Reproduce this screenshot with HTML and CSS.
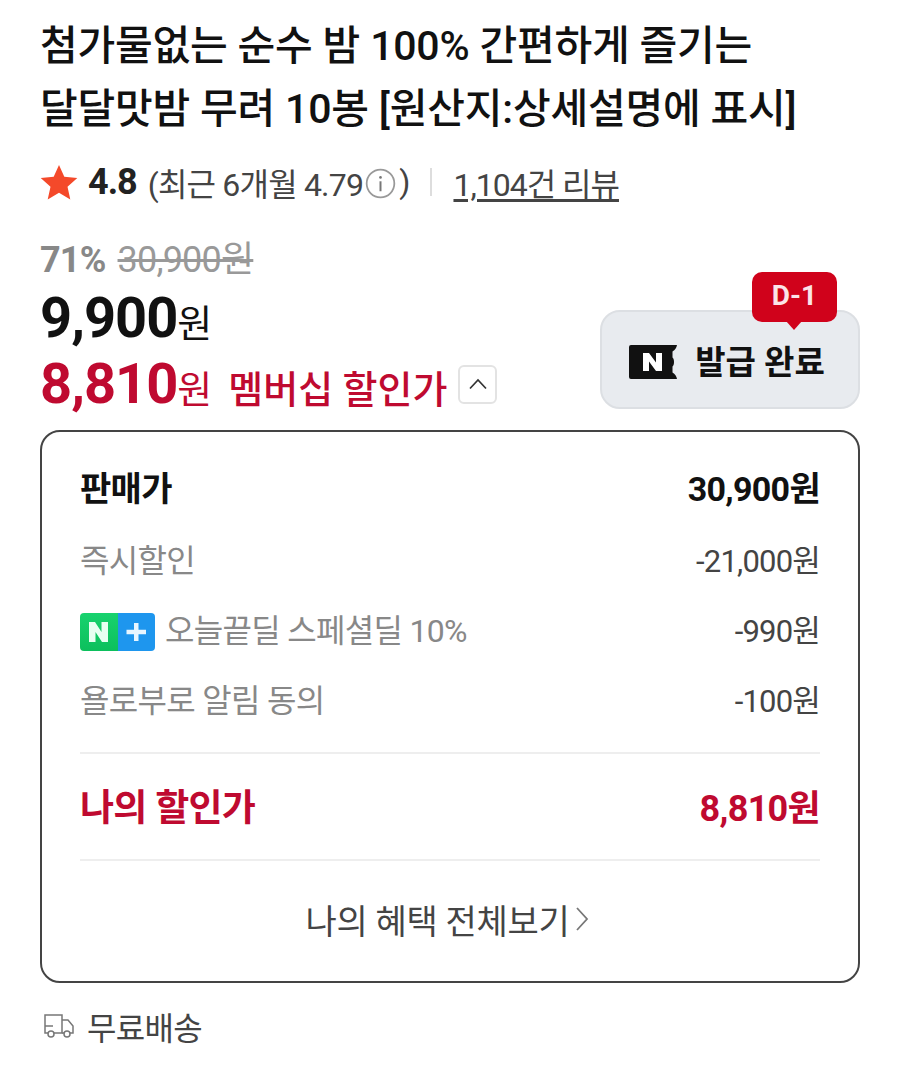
FILE: index.html
```html
<!DOCTYPE html>
<html lang="ko">
<head>
    <meta charset="UTF-8">
    <meta name="viewport" content="width=device-width, initial-scale=1.0">
    <title>달달맛밤 무려 10봉</title>
    <link rel="stylesheet" href="styles.css">
</head>
<body>
    <div class="page">
        <h1 class="title">첨가물없는 순수 밤 100% 간편하게 즐기는<br>달달맛밤 무려 10봉 [원산지:상세설명에 표시]</h1>

        <div class="rating">
            <svg class="star" width="38" height="36" viewBox="0 0 38 36"><path d="M19 1l5.300 11.800 13 1.300-9.800 8.600 2.800 12.700L19 28.800 7.700 35.400l2.800-12.700L.7 14.100l13-1.300z" fill="#f4492a"/></svg>
            <strong class="score">4.8</strong>
            <span class="recent">(최근 6개월 4.79<svg class="info" width="31" height="31" viewBox="0 0 28 28"><circle cx="14" cy="14" r="12.500" fill="none" stroke="#999" stroke-width="1.600"/><path d="M14 12v9" stroke="#777" stroke-width="1.800"/><circle cx="14" cy="8.500" r="1.200" fill="#777"/></svg>)</span>
            <span class="sep"></span>
            <span class="reviews">1,104건 리뷰</span>
        </div>

        <div class="price-area">
            <div class="prices">
                <div class="orig"><strong>71%</strong><s>30,900원</s></div>
                <div class="sale"><b>9,900</b><span>원</span></div>
                <div class="member">
                    <b>8,810</b><span class="won">원</span><span class="label">멤버십 할인가</span>
                    <span class="toggle"><svg width="20" height="12" viewBox="0 0 20 12"><path d="M2 10.500L10 2l8 8.500" fill="none" stroke="#333" stroke-width="1.700"/></svg></span>
                </div>
            </div>
            <div class="coupon">
                <svg width="48" height="34" viewBox="0 0 48 34"><path d="M2 0h46c-.5 3-2 5-4.500 6.500v6c2 1.500 2 7.500 0 9v6C46 29 47.500 31 48 34H2a2 2 0 0 1-2-2V2a2 2 0 0 1 2-2z" fill="#111"/><path d="M14 8h6l7 9.500V8h6v18h-6l-7-9.500V26h-6z" fill="#fff"/></svg>
                <span>발급 완료</span>
                <div class="dday">D-1</div>
            </div>
        </div>

        <div class="box">
            <div class="row head"><span>판매가</span><span>30,900원</span></div>
            <div class="row"><span>즉시할인</span><span class="val">-21,000원</span></div>
            <div class="row">
                <span class="with-badge">
                    <svg class="badge" width="75" height="38" viewBox="0 0 75 38">
                        <defs>
                            <linearGradient id="n-green" x1="0" y1="0" x2="0" y2="1"><stop offset="0" stop-color="#18d26e"/><stop offset="1" stop-color="#0cbf5c"/></linearGradient>
                        </defs>
                        <path d="M4 0h34v38H4a4 4 0 0 1-4-4V4a4 4 0 0 1 4-4z" fill="url(#n-green)"/><path d="M38 0h33a4 4 0 0 1 4 4v30a4 4 0 0 1-4 4H38z" fill="#1e96ee"/><path d="M9 9h6l6.500 10V9H28v20h-6l-6.500-10v10H9z" fill="#e8fff2"/><path d="M54 10h4.500v6.800H66v4.400h-7.500V28H54v-6.800h-7.500v-4.400H54z" fill="#e8f6ff"/>
                    </svg>
                    오늘끝딜 스페셜딜 10%
                </span>
                <span class="val">-990원</span>
            </div>
            <div class="row"><span>욜로부로 알림 동의</span><span class="val">-100원</span></div>
            <div class="row mine"><span class="mine-label">나의 할인가</span><span>8,810원</span></div>
            <div class="all">나의 혜택 전체보기<svg width="14" height="26" viewBox="0 0 14 26"><path d="M2 2l10 11L2 24" fill="none" stroke="#777" stroke-width="1.800"/></svg></div>
        </div>

        <div class="delivery">
            <svg width="32" height="26" viewBox="0 0 32 26"><g fill="none" stroke="#777" stroke-width="1.500"><path d="M5 20H2V2h17v18H11"/><path d="M19 7h6l5 6v7h-3M19 20h2"/><circle cx="8" cy="21" r="3"/><circle cx="24" cy="21" r="3"/><path d="M2 13h8"/></g></svg>
            무료배송
        </div>
    </div>
</body>
</html>
```

FILE: styles.css
```css
body {
    margin: 0;
    background: #fff;
    color: #111;
    font-family: Roboto, "Noto Sans CJK KR", sans-serif;
}
.page {
    padding: 15px 40px 0 40px;
}
.title {
    margin: 0;
    font-size: 41px;
    line-height: 63px;
    font-weight: 500;
    letter-spacing: -0.2px;
    white-space: nowrap;
}
.rating {
    display: flex;
    align-items: center;
    margin-top: 21px;
    height: 40px;
    font-size: 32px;
    color: #444;
    letter-spacing: -1px;
}
.score {
    margin-left: 10px;
    font-size: 36px;
    font-weight: 700;
    color: #222;
}
.recent {
    display: flex;
    align-items: center;
    margin-left: 11px;
    letter-spacing: -0.8px;
}
.info {
    margin: 2px 3px 0 2px;
}
.sep {
    width: 2px;
    height: 28px;
    margin: 0 21px;
    background: #ddd;
}
.reviews {
    text-decoration: underline;
    text-underline-offset: 3px;
}
.price-area {
    display: flex;
    justify-content: space-between;
    align-items: flex-end;
    margin-top: 35px;
}
.orig {
    display: flex;
    gap: 12px;
    font-size: 36px;
    line-height: 46px;
    color: #888;
    letter-spacing: -0.8px;
}
.orig s {
    font-weight: 400;
    color: #999;
}
.sale {
    display: flex;
    align-items: baseline;
    height: 62px;
    margin-top: 4px;
    font-size: 38px;
    line-height: 62px;
    color: #111;
}
.sale b {
    font-size: 56px;
    font-weight: 700;
    letter-spacing: -1px;
}
.member {
    display: flex;
    align-items: baseline;
    height: 62px;
    margin-top: 4px;
    color: #bf0a30;
    font-size: 38px;
    line-height: 62px;
}
.member b {
    font-size: 56px;
    font-weight: 700;
    letter-spacing: -1px;
}
.label {
    margin-left: 16px;
    font-weight: 500;
}
.toggle {
    display: flex;
    align-items: center;
    justify-content: center;
    align-self: center;
    width: 39px;
    height: 39px;
    margin-left: 11px;
    border: 2px solid #e3e3e3;
    border-radius: 6px;
    box-sizing: border-box;
}
.coupon {
    position: relative;
    display: flex;
    align-items: center;
    justify-content: center;
    gap: 18px;
    width: 260px;
    height: 99px;
    padding-right: 6px;
    box-sizing: border-box;
    background: #e8ebef;
    border: 2px solid #dcdfe3;
    border-radius: 20px;
    font-size: 33px;
    font-weight: 700;
    margin-bottom: 6px;
}
.coupon svg {
    margin-top: 4px;
}
.dday {
    position: absolute;
    top: -40px;
    right: 21px;
    width: 85px;
    height: 50px;
    line-height: 48px;
    text-align: center;
    color: #fbe4e8;
    background: #d0021b;
    border-radius: 10px;
    font-size: 28px;
    font-weight: 700;
}
.dday::after {
    content: "";
    position: absolute;
    left: 34px;
    bottom: -8px;
    border-left: 8px solid transparent;
    border-right: 8px solid transparent;
    border-top: 9px solid #d0021b;
}
.box {
    margin-top: 15px;
    padding: 24px 38px 32px 38px;
    height: 553px;
    box-sizing: border-box;
    border: 2px solid #444;
    border-radius: 20px;
}
.row {
    display: flex;
    justify-content: space-between;
    align-items: center;
    height: 70px;
    font-size: 32px;
    color: #888;
    letter-spacing: -0.7px;
}
.row .val {
    font-size: 31px;
    letter-spacing: -0.8px;
    color: #444;
}
.head {
    height: 60px;
    margin-bottom: 7px;
    font-size: 34px;
    font-weight: 700;
    color: #111;
}
.with-badge {
    display: flex;
    align-items: center;
    gap: 10px;
}
.badge {
    margin-top: 7px;
}
.mine {
    height: 101px;
    margin-top: 19px;
    padding-bottom: 4px;
    border-top: 2px solid #eee;
    border-bottom: 2px solid #eee;
    font-size: 36px;
    font-weight: 700;
    color: #bf0a30;
}
.mine-label {
    font-size: 37px;
}
.all {
    display: flex;
    align-items: center;
    justify-content: center;
    gap: 5px;
    height: 116px;
    padding-right: 6px;
    font-size: 34px;
    color: #444;
    letter-spacing: -0.3px;
}
.delivery {
    display: flex;
    align-items: center;
    gap: 12px;
    margin-top: 20px;
    margin-left: 3px;
    font-size: 32px;
    color: #444;
    letter-spacing: -0.7px;
}
```
